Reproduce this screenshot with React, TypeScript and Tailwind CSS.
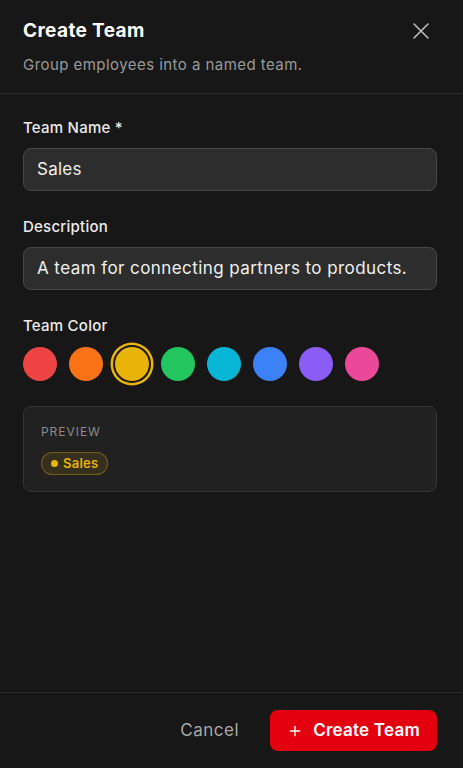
import { X, Plus } from "lucide-react";

const COLORS = ["#ef4444", "#f97316", "#eab308", "#22c55e", "#06b6d4", "#3b82f6", "#8b5cf6", "#ec4899"];

export default function App() {
  const selected = 2;
  return (
    <div className="h-[768px] w-[463px] bg-[#171717] text-white flex flex-col font-['Inter',sans-serif] tracking-[0.015em]">
      <div className="pl-[23px] pr-[26px] pt-[19px] pb-[18px] border-b border-[#2c2c2c]">
        <div className="flex items-center justify-between">
          <h1 className="text-[19px] leading-[24px] font-bold tracking-[0.02em]">Create Team</h1>
          <X className="w-[28px] h-[28px] text-[#bdbdbd] my-[-2px] mr-[2px]" strokeWidth={1.3} />
        </div>
        <p className="mt-[12px] text-[15px] leading-[20px] text-[#9a9a9a] tracking-[0.03em]">Group employees into a named team.</p>
      </div>

      <div className="flex-1 pl-[23px] pr-[26px] pt-[24px]">
        <label className="block text-[15px] leading-[20px] font-medium text-[#ececec]">Team Name *</label>
        <div className="mt-[10px] h-[43px] rounded-[8px] bg-[#2d2d2d] border border-[#474747] px-[13px] flex items-center text-[17px] text-[#f0f0f0]">
          Sales
        </div>

        <label className="block mt-[26px] text-[15px] leading-[20px] font-medium text-[#ececec]">Description</label>
        <div className="mt-[10px] h-[43px] rounded-[8px] bg-[#2d2d2d] border border-[#474747] px-[13px] flex items-center text-[17px] text-[#f0f0f0] whitespace-nowrap tracking-[0.025em]">
          A team for connecting partners to products.
        </div>

        <label className="block mt-[26px] text-[15px] leading-[20px] font-medium text-[#ececec]">Team Color</label>
        <div className="mt-[11px] flex items-center gap-[12px]">
          {COLORS.map((c, i) => (
            <div
              key={c}
              className={
                i === selected
                  ? "w-[34px] h-[34px] rounded-full ring-[2.5px] ring-offset-2 ring-offset-[#171717] ring-[#eab308]"
                  : "w-[34px] h-[34px] rounded-full"
              }
              style={{ backgroundColor: c }}
            />
          ))}
        </div>

        <div className="mt-[25px] rounded-[8px] bg-[#212121] border border-[#353535] px-[17px] pt-[17px] pb-[16px]">
          <div className="text-[12px] leading-[16px] tracking-[0.08em] text-[#8a8a8a]">PREVIEW</div>
          <div className="mt-[12px] inline-flex items-center gap-[5px] h-[23px] px-[9px] rounded-full border border-[#eab308]/35 bg-[#eab308]/10 text-[13px] font-semibold text-[#eab308]">
            <span className="w-[7px] h-[7px] rounded-full bg-[#eab308]" />
            Sales
          </div>
        </div>
      </div>

      <div className="border-t border-[#2c2c2c] h-[76px] px-[26px] flex items-center justify-end gap-[31px]">
        <span className="text-[17px] text-[#a8a8a8] tracking-[0.03em]">Cancel</span>
        <button className="h-[41px] pl-[17px] pr-[17px] rounded-[8px] bg-[#e3000f] text-white text-[17px] font-semibold flex items-center gap-[10px]">
          <Plus className="w-[16px] h-[16px]" strokeWidth={2} />
          Create Team
        </button>
      </div>
    </div>
  );
}
